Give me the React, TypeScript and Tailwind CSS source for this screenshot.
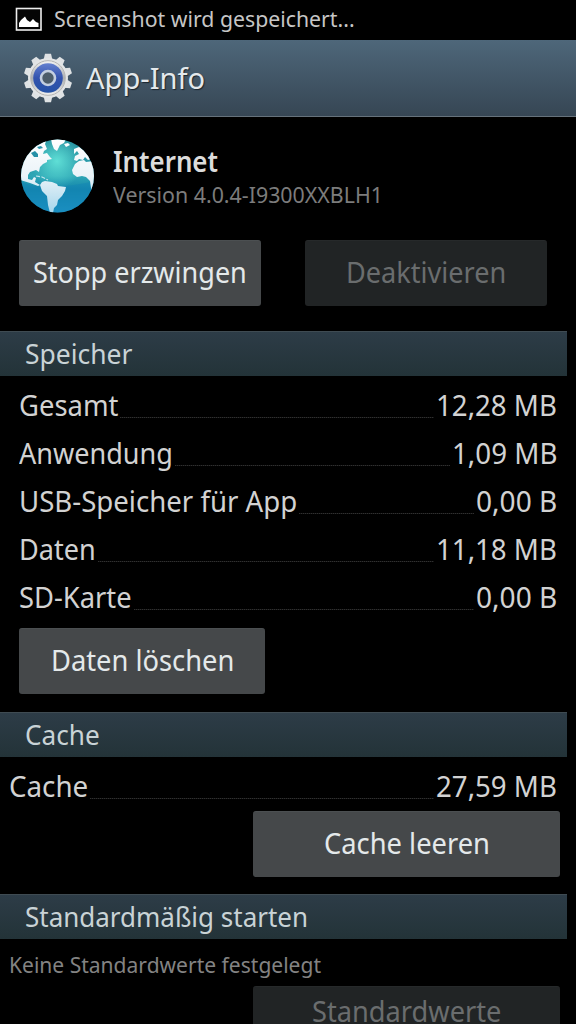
import { useLayoutEffect, useRef, type ReactNode } from "react";

/** Condenses its text horizontally so that it fills exactly `w` pixels. */
function Fit({ w, children, className = "" }: { w: number; children: ReactNode; className?: string }) {
  const ref = useRef<HTMLSpanElement>(null);
  useLayoutEffect(() => {
    const el = ref.current;
    if (el) el.style.transform = `scaleX(${w / el.offsetWidth})`;
  }, [w]);
  return (
    <span className={`block shrink-0 ${className}`} style={{ width: w }}>
      <span ref={ref} className="inline-block origin-left whitespace-nowrap">
        {children}
      </span>
    </span>
  );
}

function Section({ title, w, className = "" }: { title: string; w: number; className?: string }) {
  return (
    <h2
      className={`flex w-[567px] shrink-0 items-center border-t border-[#3f4b52] bg-linear-to-b from-[#2d3c47] to-[#233338] pl-[25px] text-[27.2px] leading-none text-[#c9d3d6] ${className}`}
    >
      <Fit w={w}>{title}</Fit>
    </h2>
  );
}

function Row({ label, lw, value, vw }: { label: string; lw: number; value: string; vw: number }) {
  return (
    <div className="flex h-12 items-center text-[28.8px] leading-none text-[#d2d2d2]">
      <Fit w={lw}>{label}</Fit>
      <span className="mt-6 mr-0.5 ml-0.5 h-px grow bg-[repeating-linear-gradient(90deg,#303030_0_1px,#141414_1px_2px)]" />
      <Fit w={vw}>{value}</Fit>
    </div>
  );
}

function Button({ label, w, disabled = false, className = "" }: { label: string; w: number; disabled?: boolean; className?: string }) {
  return (
    <button
      disabled={disabled}
      className={`flex shrink-0 items-center justify-center rounded-[3px] border-t pb-0.5 text-[28.8px] leading-none ${
        disabled ? "border-[#26292a] bg-[#212425] text-[#6a6d6e]" : "border-[#4b4f51] bg-[#45484a] text-[#e4e9ea]"
      } ${className}`}
    >
      <Fit w={w}>{label}</Fit>
    </button>
  );
}

const teeth = [0, 36, 72, 108, 144, 180, 216, 252, 288, 324];

function Gear() {
  return (
    <svg width="50" height="50" viewBox="0 0 50 50" className="shrink-0">
      <defs>
        <linearGradient id="rim" x1="0" y1="0" x2="0" y2="1">
          <stop offset="0" stopColor="#f4f4f4" />
          <stop offset="0.5" stopColor="#a9adb0" />
          <stop offset="1" stopColor="#f0f0f0" />
        </linearGradient>
        <linearGradient id="blue" x1="0" y1="0" x2="0" y2="1">
          <stop offset="0" stopColor="#6480cf" />
          <stop offset="0.5" stopColor="#3353ae" />
          <stop offset="1" stopColor="#2452a6" />
        </linearGradient>
      </defs>
      {teeth.map((a) => (
        <path key={a} d="M20.5 7 L22 0.8 H28 L29.5 7 Z" fill="#dfe2e4" transform={`rotate(${a} 25 25)`} />
      ))}
      <circle cx="25" cy="25" r="20" fill="#e3e5e6" />
      <circle cx="25" cy="25" r="17.3" fill="url(#rim)" stroke="#b5b5b3" strokeWidth="1" />
      <circle cx="25" cy="25" r="14.8" fill="url(#blue)" />
      <circle cx="25" cy="25" r="7" fill="#4c5d6a" stroke="#c3cfe0" strokeWidth="2.6" />
    </svg>
  );
}

function Globe() {
  return (
    <svg width="74" height="74" viewBox="0 0 74 74" className="shrink-0">
      <defs>
        <linearGradient id="sea" x1="0" y1="0" x2="0" y2="1">
          <stop offset="0" stopColor="#238a9a" />
          <stop offset="0.5" stopColor="#2ea6b5" />
          <stop offset="0.68" stopColor="#1487ad" />
          <stop offset="1" stopColor="#2299cb" />
        </linearGradient>
        <radialGradient id="glow" cx="0.5" cy="0.3" r="0.36">
          <stop offset="0" stopColor="#5fdfd6" />
          <stop offset="1" stopColor="#5fdfd6" stopOpacity="0" />
        </radialGradient>
        <linearGradient id="land" gradientUnits="userSpaceOnUse" x1="0" y1="0" x2="0" y2="74">
          <stop offset="0" stopColor="#ffffff" />
          <stop offset="0.5" stopColor="#eaf3f8" />
          <stop offset="1" stopColor="#a5d6ec" />
        </linearGradient>
        <clipPath id="disc">
          <circle cx="37.5" cy="37" r="36.5" />
        </clipPath>
      </defs>
      <g clipPath="url(#disc)">
        <rect width="74" height="74" fill="url(#sea)" />
        <path d="M0 42 Q16 50 37 48 T74 42 V74 H0 Z" fill="#1283b5" opacity="0.45" />
        <rect width="74" height="74" fill="url(#glow)" />
        <g fill="url(#land)">
          <path d="M0 0 H27 L25 5 L27 10 L24 12 L23 15 L27 14 L30 18 L32 20 L27 21 L27 23 L23 25 L20 28 L19 33 L16 31 L10 33 L8 36 L8 40 L12 41 L14 38 L16 39 L15 43 L20 46 L18 47 L10 44 L0 41 Z" />
          <path d="M31 0 H46 L44 4 L40 6 L37 12 L34 10 L32 5 Z" />
          <path d="M20 46 L22 43 L25 42 L32 43 L37 45 L38 47 L46 48 L45 52 L42 57 L38 61 L37 66 L34 69 L33 74 H30 L28 66 L27 57 L22 52 Z" />
          <path d="M55 25 L59 22 L64 21 L66 23 L74 22 V56 L71 49 L70 42 L66 38 L62 37 L57 38 L53 35 L52 31 Z" />
          <path d="M54 10 L59 8 L66 13 L71 20 L68 21 L65 18 L63 21 L59 20 L57 22 L54 21 L55 17 L59 15 L57 12 L54 15 Z" />
          <path d="M44 5 L48 4 L50 6 L46 8 Z" />
        </g>
        <path d="M16 37 L22 38 L28 41" fill="none" stroke="#c5e5ec" strokeWidth="1.2" strokeDasharray="4 1.5" />
        <path d="M11 14 L15 12 L18 15 L18 18 L14 18 Z M17 8 L21 7 L23 9 L19 10 Z" fill="#2591a8" />
      </g>
    </svg>
  );
}

export default function App() {
  return (
    <main className="flex h-[1024px] w-[576px] flex-col overflow-hidden bg-black font-['Noto_Sans',sans-serif]">
      <div className="flex h-10 shrink-0 items-center pb-0.5 pl-[15px] text-[22.4px] leading-none text-[#c6c6c6]">
        <svg width="28" height="25" viewBox="0 0 28 25" className="mr-[11px] shrink-0">
          <rect x="1.5" y="1.5" width="24.5" height="21.5" fill="#050505" stroke="#eee" strokeWidth="1.6" />
          <path d="M4 20 V16 L6 13 L10 9.5 L12 13 L15 15 L18 12 L21 15 L23.5 16 V20 Z" fill="#fff" />
        </svg>
        <Fit w={301}>Screenshot wird gespeichert...</Fit>
      </div>

      <header className="flex h-[77px] shrink-0 items-center border-b border-[#66727b] bg-linear-to-b from-[#4e677a] to-[#364654] pl-[23px] text-[28.8px] leading-none text-[#e4e9ec]">
        <Gear />
        <h1 className="ml-[13px] [text-shadow:1px_1px_1px_#1b252d]">
          <Fit w={119}>App-Info</Fit>
        </h1>
      </header>

      <div className="flex h-[123px] shrink-0 pt-[22px] pl-5">
        <Globe />
        <div className="ml-[19px] flex flex-col pt-1.5">
          <Fit w={105} className="h-[34px] text-[28.8px] leading-[32px] font-semibold text-[#dcdcdc]">Internet</Fit>
          <Fit w={270} className="text-[22.4px] leading-[32px] text-[#7c7c7c]">Version 4.0.4-I9300XXBLH1</Fit>
        </div>
      </div>

      <div className="flex shrink-0 gap-11 pl-[19px]">
        <Button label="Stopp erzwingen" w={214} className="h-[66px] w-[242px]" />
        <Button label="Deaktivieren" w={160} disabled className="h-[66px] w-[242px]" />
      </div>

      <Section title="Speicher" w={107} className="mt-[25px] h-[45px]" />
      <div className="shrink-0 pt-[5px] pr-[19px] pl-[19px]">
        <Row label="Gesamt" lw={99} value="12,28 MB" vw={121} />
        <Row label="Anwendung" lw={154} value="1,09 MB" vw={105} />
        <Row label="USB-Speicher für App" lw={278} value="0,00 B" vw={81} />
        <Row label="Daten" lw={77} value="11,18 MB" vw={121} />
        <Row label="SD-Karte" lw={113} value="0,00 B" vw={81} />
      </div>
      <Button label="Daten löschen" w={183} className="mt-[7px] ml-[19px] h-[66px] w-[246px]" />

      <Section title="Cache" w={75} className="mt-[18px] h-[45px]" />
      <div className="shrink-0 pt-[5px] pr-[19px] pl-[9px]">
        <Row label="Cache" lw={79} value="27,59 MB" vw={121} />
      </div>
      <Button label="Cache leeren" w={166} className="mt-px ml-[253px] h-[66px] w-[307px]" />

      <Section title="Standardmäßig starten" w={283} className="mt-[17px] h-[45px]" />
      <div className="flex h-[47px] shrink-0 items-center pt-1.5 pl-[9px] text-[22.4px] leading-none text-[#838383]">
        <Fit w={312}>Keine Standardwerte festgelegt</Fit>
      </div>
      <Button label="Standardwerte" w={189} disabled className="ml-[253px] h-[52px] w-[307px]" />
    </main>
  );
}
